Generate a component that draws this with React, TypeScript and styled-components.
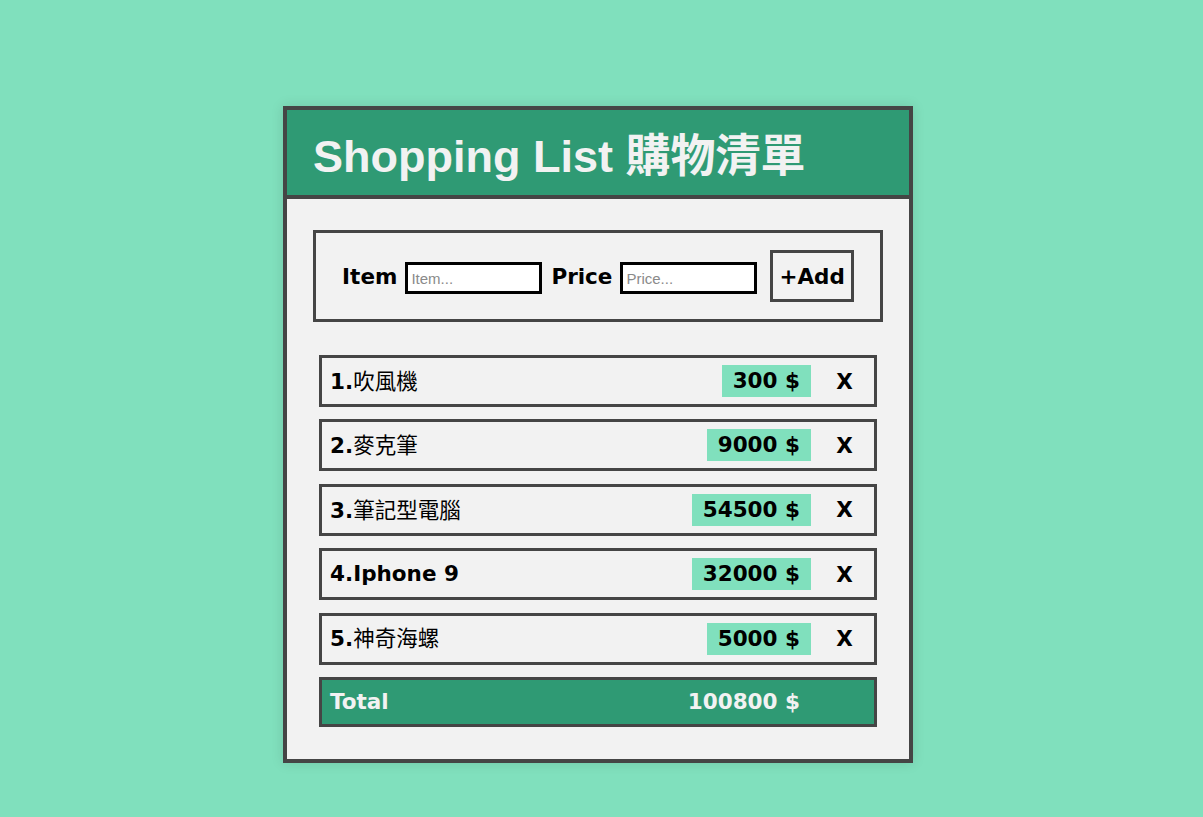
import React, { useState } from 'react';
import styled, { createGlobalStyle } from 'styled-components';

const MINT = '#80e0bd';
const GREEN = '#2f9a74';
const DARK = '#454545';
const PAPER = '#f2f2f2';
const HEAVY = '"DejaVu Sans", "Noto Sans CJK TC", sans-serif';

const GlobalStyle = createGlobalStyle`
  html, body {
    margin: 0;
    padding: 0;
    background: ${MINT};
  }
  body {
    font-family: "Liberation Sans", Arial, "Noto Sans CJK TC", sans-serif;
  }
`;

const Page = styled.div`
  min-height: 817px;
  padding: 106px 7px 0 0;
  box-sizing: border-box;
`;

const Card = styled.div`
  width: 630px;
  margin: 0 auto;
  border: 4px solid ${DARK};
  box-sizing: border-box;
  background: ${PAPER};
  box-shadow: 0 0 12px rgba(0, 0, 0, 0.12);
`;

const Header = styled.header`
  height: 89px;
  box-sizing: border-box;
  background: ${GREEN};
  border-bottom: 4px solid ${DARK};
  display: flex;
  align-items: center;
  padding: 0 26px;
`;

const Title = styled.h1`
  margin: 0;
  color: ${PAPER};
  font-family: "Liberation Sans", Arial, "Noto Sans CJK TC", sans-serif;
  font-size: 45px;
  font-weight: bold;
`;

const Body = styled.div`
  padding: 31px 26px 32px;
`;

const Form = styled.form`
  height: 92px;
  box-sizing: border-box;
  border: 3px solid ${DARK};
  display: flex;
  align-items: center;
  justify-content: center;
  margin-bottom: 33px;
`;

const Label = styled.label`
  font-family: ${HEAVY};
  font-weight: bold;
  font-size: 21.5px;
  margin-right: 8px;
  color: #000;
`;

const Input = styled.input<{ $gap: number }>`
  width: 137px;
  height: 32px;
  box-sizing: border-box;
  border: 3px solid #000;
  background: #fff;
  padding: 0 3px;
  margin-right: ${(p) => p.$gap}px;
  margin-top: 4px;
  font-family: "Liberation Sans", Arial, sans-serif;
  font-size: 15px;
  outline: none;
  &::placeholder {
    color: #8a8a8a;
  }
`;

const AddButton = styled.button`
  height: 52px;
  box-sizing: border-box;
  border: 3px solid ${DARK};
  background: ${PAPER};
  padding: 0 6px;
  font-family: ${HEAVY};
  font-weight: bold;
  font-size: 21.5px;
  color: #000;
  cursor: pointer;
`;

const List = styled.ul`
  list-style: none;
  margin: 0;
  padding: 0 6px;
  display: flex;
  flex-direction: column;
  gap: 12.4px;
`;

const Row = styled.li<{ $total?: boolean }>`
  height: ${(p) => (p.$total ? 50 : 52)}px;
  box-sizing: border-box;
  border: 3px solid ${DARK};
  background: ${(p) => (p.$total ? GREEN : PAPER)};
  color: ${(p) => (p.$total ? PAPER : '#000')};
  display: flex;
  align-items: center;
  padding-left: 8px;
`;

const Name = styled.span`
  flex: 1;
  font-size: 21.5px;
  line-height: 1;
  white-space: nowrap;
`;

const Num = styled.span`
  font-family: ${HEAVY};
  font-weight: bold;
`;

const ItemText = styled.span<{ $cjk: boolean }>`
  font-family: ${(p) => (p.$cjk ? '"Noto Sans CJK TC", sans-serif' : HEAVY)};
  font-weight: ${(p) => (p.$cjk ? 'normal' : 'bold')};
`;

const Price = styled.span<{ $total?: boolean }>`
  height: 32px;
  line-height: 32px;
  padding: 0 11px;
  background: ${(p) => (p.$total ? 'transparent' : MINT)};
  font-family: ${HEAVY};
  font-weight: bold;
  font-size: 21.5px;
  white-space: nowrap;
`;

const Remove = styled.button`
  width: 63px;
  height: 100%;
  border: none;
  background: none;
  padding: 0 0 0 4px;
  font-family: ${HEAVY};
  font-weight: bold;
  font-size: 21.5px;
  color: #000;
  cursor: pointer;
`;

const Spacer = styled.span`
  width: 63px;
`;

type Item = { name: string; price: number };

const initial: Item[] = [
  { name: '吹風機', price: 300 },
  { name: '麥克筆', price: 9000 },
  { name: '筆記型電腦', price: 54500 },
  { name: 'Iphone 9', price: 32000 },
  { name: '神奇海螺', price: 5000 },
];

const isCjk = (s: string) => /[\u3400-\u9fff]/.test(s);

const App = (): JSX.Element => {
  const [items, setItems] = useState<Item[]>(initial);
  const [name, setName] = useState('');
  const [price, setPrice] = useState('');

  const total = items.reduce((sum, it) => sum + it.price, 0);

  const add = (e: React.FormEvent) => {
    e.preventDefault();
    if (!name || !price) return;
    setItems([...items, { name, price: Number(price) || 0 }]);
    setName('');
    setPrice('');
  };

  return (
    <>
      <GlobalStyle />
      <Page>
        <Card>
          <Header>
            <Title>Shopping List 購物清單</Title>
          </Header>
          <Body>
            <Form onSubmit={add}>
              <Label htmlFor="item">Item</Label>
              <Input id="item" $gap={9} placeholder="Item..." value={name} onChange={(e) => setName(e.target.value)} />
              <Label htmlFor="price">Price</Label>
              <Input id="price" $gap={13} placeholder="Price..." value={price} onChange={(e) => setPrice(e.target.value)} />
              <AddButton type="submit">+Add</AddButton>
            </Form>
            <List>
              {items.map((it, i) => (
                <Row key={i}>
                  <Name>
                    <Num>{i + 1}.</Num>
                    <ItemText $cjk={isCjk(it.name)}>{it.name}</ItemText>
                  </Name>
                  <Price>{it.price} $</Price>
                  <Remove onClick={() => setItems(items.filter((_, j) => j !== i))}>X</Remove>
                </Row>
              ))}
              <Row $total>
                <Name>
                  <Num>Total</Num>
                </Name>
                <Price $total>{total} $</Price>
                <Spacer />
              </Row>
            </List>
          </Body>
        </Card>
      </Page>
    </>
  );
};

export default App;
